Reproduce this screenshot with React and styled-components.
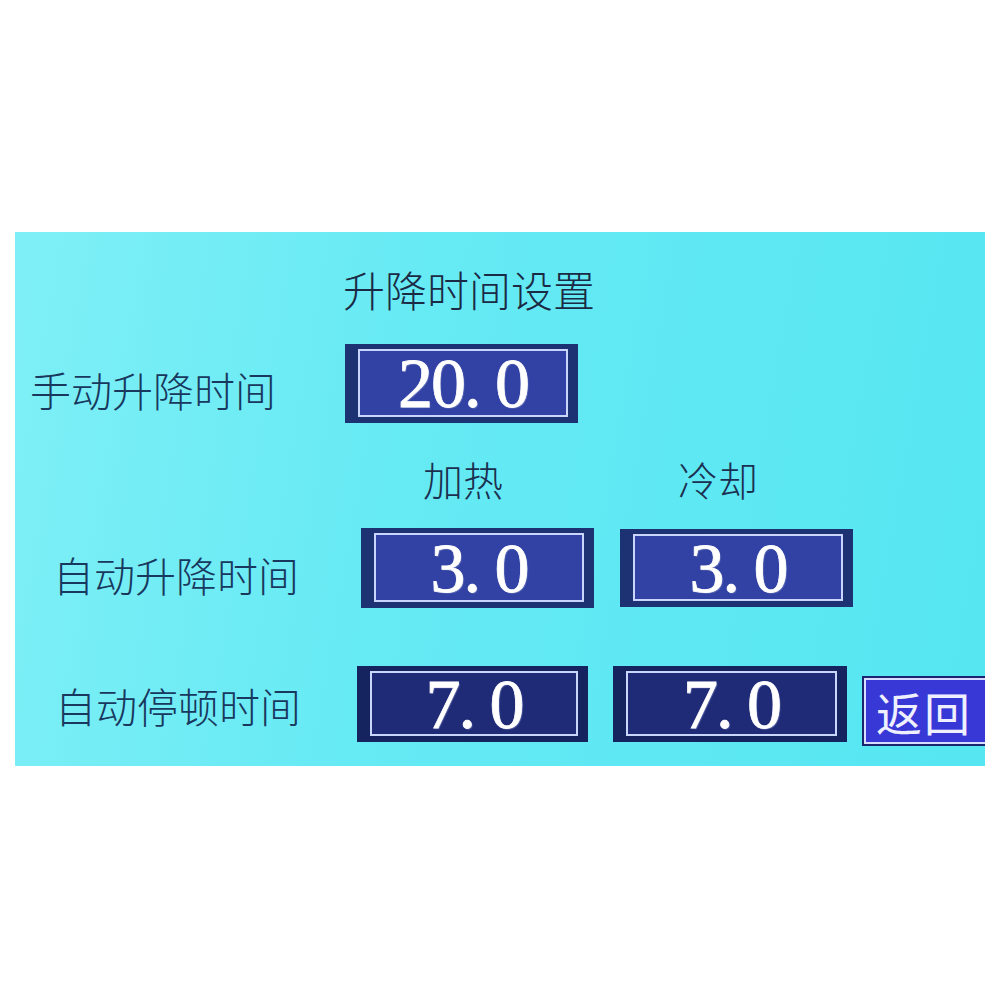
import React from "react";
import styled, { createGlobalStyle } from "styled-components";

const GlobalStyle = createGlobalStyle`
  html, body {
    margin: 0;
    padding: 0;
    background: #ffffff;
  }
  body {
    font-family: "Noto Sans CJK SC", "Noto Sans", sans-serif;
  }
`;

const Page = styled.div`
  width: 1000px;
  height: 1000px;
  padding-top: 232px;
  padding-left: 15px;
  box-sizing: border-box;
`;

const Panel = styled.div`
  width: 970px;
  height: 534px;
  box-sizing: border-box;
  padding-top: 36px;
  overflow: hidden;
  display: flex;
  flex-direction: column;
  background: linear-gradient(100deg, #7feff6 0%, #66eaf4 40%, #55e6f2 100%);
`;

const Title = styled.div`
  padding-left: 328px;
  font-size: 42px;
  line-height: 42px;
  height: 42px;
  color: #1b2a44;
  font-weight: 300;
`;

const Row = styled.div`
  display: flex;
  align-items: ${(p) => (p.$top_align ? "flex-start" : "center")};
  padding-left: ${(p) => p.$indent}px;
  margin-top: ${(p) => p.$top}px;
`;

const Label = styled.div`
  width: ${(p) => p.$width}px;
  flex-shrink: 0;
  font-size: 41px;
  line-height: 41px;
  color: #18385e;
  font-weight: 300;
  padding-top: ${(p) => p.$drop || 0}px;
`;

const HeaderRow = styled.div`
  display: flex;
  padding-left: 408px;
  margin-top: 36px;
  height: 40px;
`;

const Header = styled.div`
  font-size: 40px;
  line-height: 40px;
  color: #1b3050;
  font-weight: 300;
  margin-left: ${(p) => p.$gap || 0}px;
`;

const ValueFrame = styled.div`
  width: ${(p) => p.$width}px;
  height: ${(p) => p.$height}px;
  flex-shrink: 0;
  margin-left: ${(p) => p.$gap || 0}px;
  box-sizing: border-box;
  padding: 5px 10px 6px 13px;
  background: ${(p) => (p.$dark ? "#15245e" : "#1d3272")};
  display: flex;
`;

const ValueInner = styled.div`
  flex: 1;
  border: 2px solid #c9d5fb;
  background: ${(p) => (p.$dark ? "#1f2b76" : "#3142a4")};
  display: flex;
  align-items: center;
  justify-content: center;
  font-family: "Liberation Serif", "DejaVu Serif", serif;
  font-size: 70px;
  line-height: 1;
  letter-spacing: -2px;
  color: #ffffff;
  -webkit-text-stroke: 0.8px #ffffff;
  text-shadow: 1px 1px 1px rgba(120, 130, 190, 0.8);
  white-space: pre;
  padding-top: 2px;
`;

const BackButton = styled.button`
  width: 132px;
  height: 70px;
  flex-shrink: 0;
  margin-left: 15px;
  margin-top: 10px;
  box-sizing: border-box;
  border: 2px solid #1a2470;
  box-shadow: inset 0 0 0 2px #d8dcff;
  background: #3838d6;
  color: #eef0ff;
  font-family: "Noto Sans CJK SC", sans-serif;
  font-size: 46px;
  line-height: 1;
  padding: 0 0 0 12px;
  text-align: left;
  letter-spacing: 2px;
  cursor: pointer;
`;

const Value = ({ value, width, height, gap, dark }) => (
  <ValueFrame $width={width} $height={height} $gap={gap} $dark={dark}>
    <ValueInner $dark={dark}>{value}</ValueInner>
  </ValueFrame>
);

export default function App() {
  return (
    <>
      <GlobalStyle />
      <Page>
        <Panel>
          <Title>升降时间设置</Title>

          <Row $indent={15} $top={34}>
            <Label $width={315} $drop={12}>手动升降时间</Label>
            <Value value="20. 0" width={233} height={79} />
          </Row>

          <HeaderRow>
            <Header>加热</Header>
            <Header $gap={175}>冷却</Header>
          </HeaderRow>

          <Row $indent={38} $top={29}>
            <Label $width={308} $drop={12}>自动升降时间</Label>
            <Value value="3. 0" width={233} height={80} />
            <Value value="3. 0" width={233} height={78} gap={26} />
          </Row>

          <Row $indent={40} $top={58} $top_align>
            <Label $width={302} $drop={19}>自动停顿时间</Label>
            <Value value="7. 0" width={231} height={76} dark />
            <Value value="7. 0" width={234} height={76} gap={25} dark />
            <BackButton>返回</BackButton>
          </Row>
        </Panel>
      </Page>
    </>
  );
}
